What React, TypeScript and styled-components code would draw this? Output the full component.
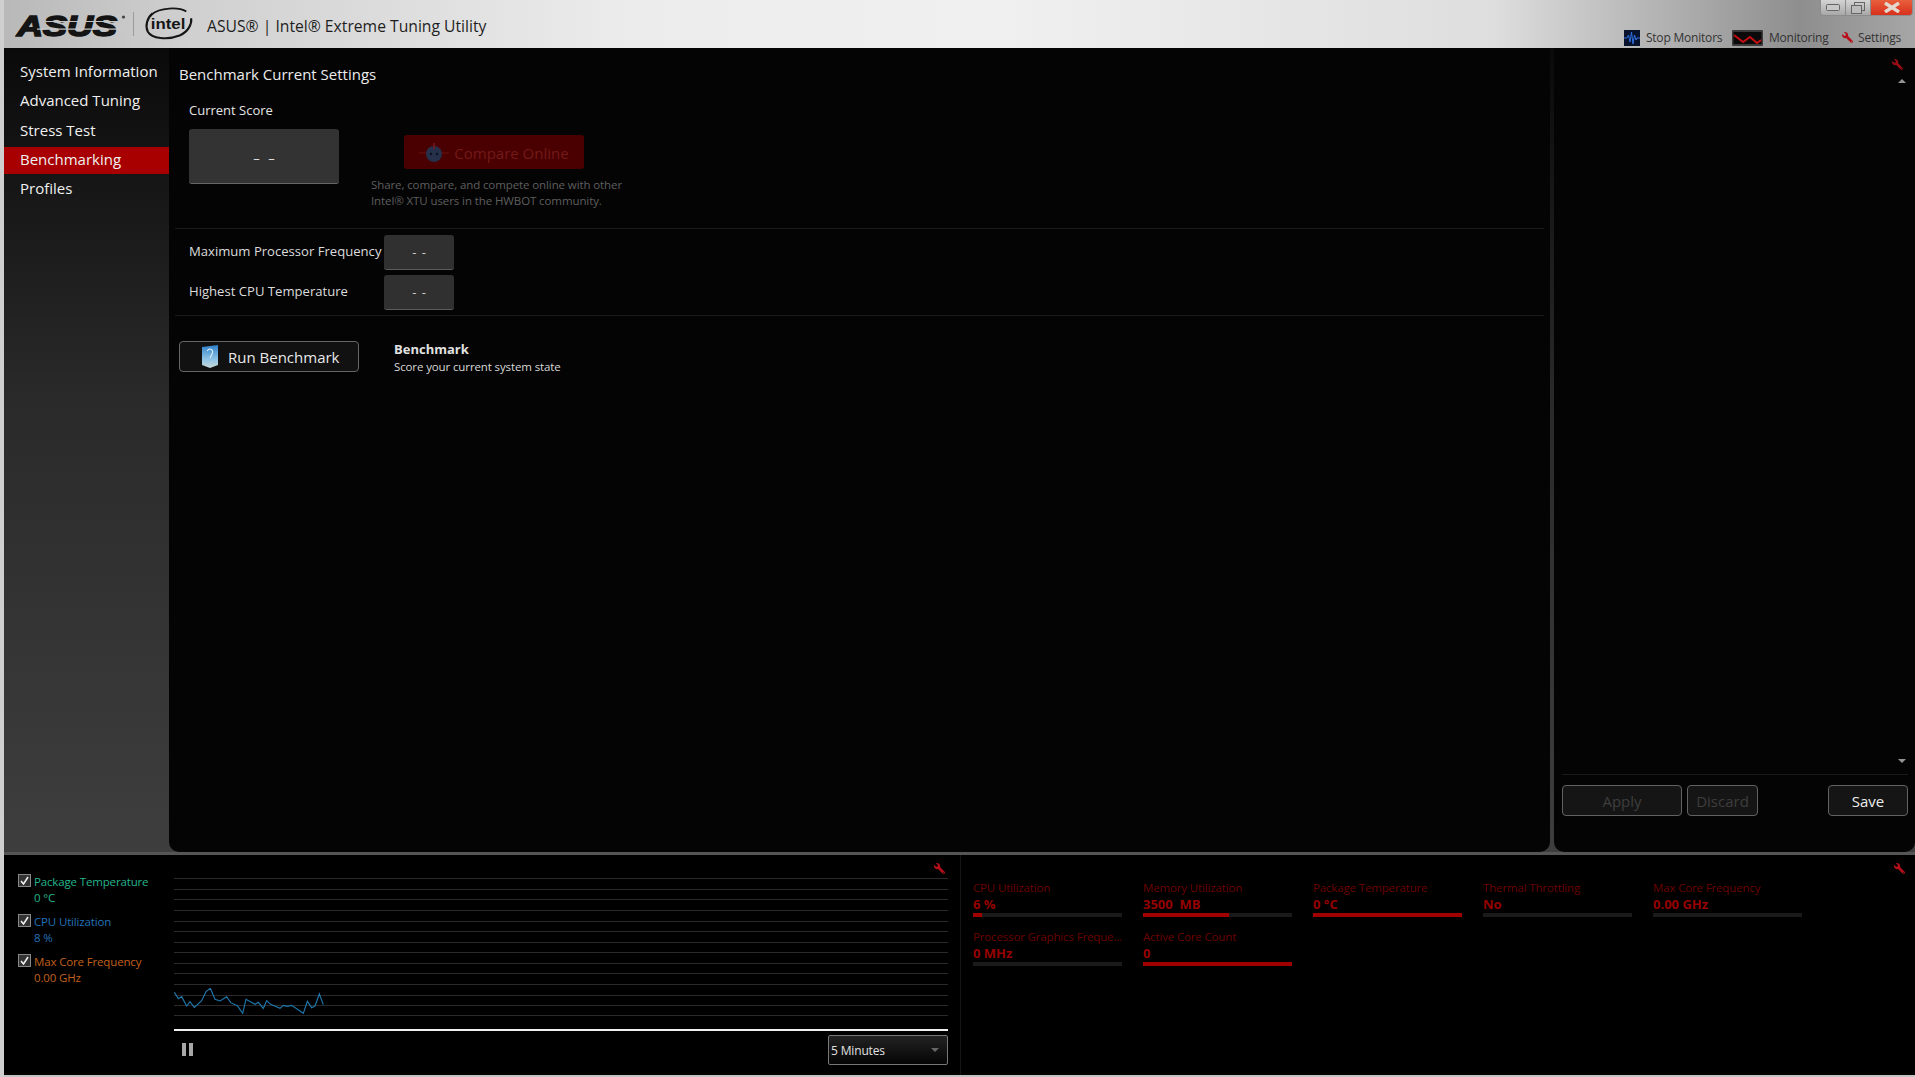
import React from 'react'
import styled, { createGlobalStyle } from 'styled-components'
import { FaWrench } from 'react-icons/fa'

const GlobalStyle = createGlobalStyle`
    html, body {
        margin: 0;
        padding: 0;
        background: #000;
        font-family: "Open Sans", "Noto Sans", "Liberation Sans", sans-serif;
    }
    * {
        box-sizing: border-box;
    }
`

const navItems = ['System Information', 'Advanced Tuning', 'Stress Test', 'Benchmarking', 'Profiles']

const legend = [
    { name: 'Package Temperature', value: '0 °C', color: '#25b58c' },
    { name: 'CPU Utilization', value: '8 %', color: '#2272b8' },
    { name: 'Max Core Frequency', value: '0.00 GHz', color: '#c2601c' },
]

const metrics = [
    { name: 'CPU Utilization', value: '6 %', fill: 6 },
    { name: 'Memory Utilization', value: '3500  MB', fill: 58 },
    { name: 'Package Temperature', value: '0 °C', fill: 100 },
    { name: 'Thermal Throttling', value: 'No', fill: 0 },
    { name: 'Max Core Frequency', value: '0.00 GHz', fill: 0 },
    { name: 'Processor Graphics Freque...', value: '0 MHz', fill: 0 },
    { name: 'Active Core Count', value: '0', fill: 100 },
]

const gridOffsets = [0, 11, 21, 32, 43, 53, 64, 74, 85, 95, 106, 117, 127, 137]

const sparkPoints =
    '1,13 13,32 23,26 38,54 48,41 61,58 83,38 96,11 109,1 123,34 138,39 158,26 170,44 190,53 206,76 216,34 243,49 253,43 268,61 278,38 290,49 318,61 328,52 340,55 353,52 388,76 400,40 413,59 423,54 436,18 448,50'

const AsusLogo = () => (
    <svg width="112" height="36" viewBox="0 0 112 36">
        <text x="2" y="30" fontFamily="Liberation Sans" fontWeight="700" fontStyle="italic" fontSize="29" textLength="100" lengthAdjust="spacingAndGlyphs" fill="#141414" stroke="#141414" strokeWidth="1.6">
            ASUS
        </text>
        <rect x="30" y="15" width="76" height="1" fill="#c4c4c4" />
        <rect x="22" y="22.5" width="84" height="1.2" fill="#cbcbcb" />
        <circle cx="108.5" cy="11" r="1.6" fill="#444" />
    </svg>
)

const IntelLogo = () => (
    <svg width="50" height="34" viewBox="0 0 52 34">
        <path d="M9 6 C3 11 1 19 4 25 C8 32 24 34 37 29 C46 25 50 17 49 11" fill="none" stroke="#161616" strokeWidth="2.2" />
        <path d="M8 7 C16 0 36 -1 44 4" fill="none" stroke="#161616" strokeWidth="1.8" />
        <text x="7" y="22" fontFamily="Liberation Sans" fontWeight="700" fontSize="16" textLength="36" lengthAdjust="spacingAndGlyphs" fill="#161616">
            intel
        </text>
    </svg>
)

const StopMonitorsIcon = () => (
    <svg width="16" height="16" viewBox="0 0 16 16">
        <rect width="16" height="16" fill="#06122e" />
        <path d="M0 8 H3 L4.5 5 L6 12 L7.5 2 L9 14 L10.5 5 L12 10 L13 8 H16" fill="none" stroke="#2f6fe0" strokeWidth="1" />
    </svg>
)

const MonitoringIcon = () => (
    <svg width="31" height="16" viewBox="0 0 31 16">
        <rect width="31" height="16" rx="1" fill="#3c3c3c" />
        <rect x="1.5" y="2" width="28" height="12" fill="#0a0a0a" />
        <path d="M2 5 L11 12 L18 7 L25 13 L29 10" fill="none" stroke="#c40f14" strokeWidth="2" />
    </svg>
)

const CompareIcon = () => (
    <svg width="30" height="22" viewBox="0 0 30 22">
        <path d="M0 11 H30" stroke="#6a1212" strokeWidth="1" />
        <circle cx="15" cy="12" r="8" fill="#27304a" />
        <path d="M15 1 V7" stroke="#7a1a1a" strokeWidth="1.5" />
        <circle cx="12" cy="12" r="1.2" fill="#0c1020" />
        <circle cx="18" cy="12" r="1.2" fill="#0c1020" />
    </svg>
)

const RunIcon = () => (
    <svg width="18" height="23" viewBox="0 0 18 23">
        <defs>
            <linearGradient id="runGrad" x1="0" y1="0" x2="0" y2="1">
                <stop offset="0" stopColor="#2f7fc8" />
                <stop offset="0.6" stopColor="#8cc3e6" />
                <stop offset="1" stopColor="#c8d8d8" />
            </linearGradient>
        </defs>
        <path d="M1 2 L17 0 V20 L9 23 L1 20 Z" fill="url(#runGrad)" />
        <path d="M6 6 C9 2 13 5 11 9 L9 13" fill="none" stroke="#dff0fa" strokeWidth="1.1" />
    </svg>
)

const Spark = () => (
    <SparkSvg viewBox="0 0 450 78" width="150" height="26">
        <polyline points={sparkPoints} fill="none" stroke="#1f78ad" strokeWidth="3.4" />
    </SparkSvg>
)

const App = () => {
    return (
        <Page>
            <GlobalStyle />
            <TitleBar>
                <Brand>
                    <AsusLogo />
                    <BrandSeparator />
                    <IntelLogo />
                    <AppTitle>ASUS® | Intel® Extreme Tuning Utility</AppTitle>
                </Brand>
                <TitleRight>
                    <WindowControls>
                        <WinButton>
                            <svg width="14" height="8" viewBox="0 0 14 8">
                                <rect x="0.5" y="0.5" width="13" height="6" rx="1" fill="#c8c8c8" stroke="#666" />
                            </svg>
                        </WinButton>
                        <WinButton>
                            <svg width="14" height="12" viewBox="0 0 14 12">
                                <rect x="3.5" y="0.5" width="10" height="8" fill="none" stroke="#666" />
                                <rect x="0.5" y="3.5" width="10" height="8" fill="#bbb" stroke="#666" />
                            </svg>
                        </WinButton>
                        <CloseButton>
                            <svg width="18" height="11" viewBox="0 0 18 11">
                                <path d="M2 1 L16 10 M16 1 L2 10" stroke="#e4d8d0" strokeWidth="3.4" />
                            </svg>
                        </CloseButton>
                    </WindowControls>
                    <Toolbar>
                        <ToolItem>
                            <StopMonitorsIcon />
                            Stop Monitors
                        </ToolItem>
                        <ToolItem>
                            <MonitoringIcon />
                            Monitoring
                        </ToolItem>
                        <SettingsItem>
                            <RedWrench size={11} />
                            Settings
                        </SettingsItem>
                    </Toolbar>
                </TitleRight>
            </TitleBar>

            <Upper>
                <Sidebar>
                    {navItems.map(item => (
                        <NavItem key={item} $active={item === 'Benchmarking'}>{item}</NavItem>
                    ))}
                </Sidebar>

                <MainPane>
                    <PaneTitle>Benchmark Current Settings</PaneTitle>
                    <ScoreSection>
                        <ScoreLabel>Current Score</ScoreLabel>
                        <ScoreRow>
                            <ScoreBox>– –</ScoreBox>
                            <CompareColumn>
                                <CompareButton>
                                    <CompareIcon />
                                    Compare Online
                                </CompareButton>
                                <CompareNote>
                                    Share, compare, and compete online with other
                                    <br />
                                    Intel® XTU users in the HWBOT community.
                                </CompareNote>
                            </CompareColumn>
                        </ScoreRow>
                    </ScoreSection>
                    <StatsSection>
                        <StatRow>
                            <StatLabel>Maximum Processor Frequency</StatLabel>
                            <StatValue>- -</StatValue>
                        </StatRow>
                        <StatRow>
                            <StatLabel>Highest CPU Temperature</StatLabel>
                            <StatValue>- -</StatValue>
                        </StatRow>
                    </StatsSection>
                    <RunRow>
                        <RunButton>
                            <RunIcon />
                            Run Benchmark
                        </RunButton>
                        <RunInfo>
                            <RunInfoTitle>Benchmark</RunInfoTitle>
                            <RunInfoText>Score your current system state</RunInfoText>
                        </RunInfo>
                    </RunRow>
                </MainPane>

                <SidePane>
                    <SideTools>
                        <PaneWrench size={11} />
                        <ScrollArrow $up />
                    </SideTools>
                    <SideScroll>
                        <ScrollArrow />
                    </SideScroll>
                    <ActionBar>
                        <ActionGroup>
                            <ActionButton disabled $width={120}>Apply</ActionButton>
                            <ActionButton disabled $width={71}>Discard</ActionButton>
                        </ActionGroup>
                        <ActionButton $width={80}>Save</ActionButton>
                    </ActionBar>
                </SidePane>
            </Upper>

            <Lower>
                <Legend>
                    {legend.map(item => (
                        <LegendItem key={item.name} $color={item.color}>
                            <CheckBox>
                                <svg width="9" height="9" viewBox="0 0 9 9">
                                    <path d="M1 5 L3.5 8 L8 1" fill="none" stroke="#eee" strokeWidth="1.6" />
                                </svg>
                            </CheckBox>
                            <div>
                                <LegendName>{item.name}</LegendName>
                                <LegendValue>{item.value}</LegendValue>
                            </div>
                        </LegendItem>
                    ))}
                </Legend>

                <ChartColumn>
                    <ChartTools>
                        <RedWrench size={11} />
                    </ChartTools>
                    <Chart>
                        {gridOffsets.map((top, i) => (
                            <GridLine key={i} style={{ top }} />
                        ))}
                        <Spark />
                    </Chart>
                    <ChartFooter>
                        <PauseIcon>
                            <span />
                            <span />
                        </PauseIcon>
                        <RangeSelect>
                            5 Minutes
                            <SelectArrow />
                        </RangeSelect>
                    </ChartFooter>
                </ChartColumn>

                <MetricsPane>
                    <MetricsTools>
                        <RedWrench size={11} />
                    </MetricsTools>
                    <MetricsGrid>
                        {metrics.map(m => (
                            <Metric key={m.name}>
                                <MetricName>{m.name}</MetricName>
                                <MetricValue>{m.value}</MetricValue>
                                <MetricBar>
                                    <MetricFill style={{ width: `${m.fill}%` }} />
                                </MetricBar>
                            </Metric>
                        ))}
                    </MetricsGrid>
                </MetricsPane>
            </Lower>
            <BottomEdge />
        </Page>
    )
}

export default App

const Page = styled.div`
    width: 1915px;
    height: 1077px;
    overflow: hidden;
    display: flex;
    flex-direction: column;
    background: #000;
    border-left: 4px solid #cfcfcf;
`
const TitleBar = styled.div`
    height: 48px;
    margin-left: -4px;
    display: flex;
    justify-content: space-between;
    background: linear-gradient(90deg, #b8b8b8 0%, #d0d0d0 10%, #ececec 33%, #f0f0f0 52%, #dedede 78%, #8e8e8e 94%, #a6a6a6 100%);
`
const Brand = styled.div`
    display: flex;
    align-items: center;
    padding-left: 15px;
`
const BrandSeparator = styled.div`
    width: 1px;
    height: 24px;
    margin: 0 10px 0 6px;
    background: #9a9a9a;
`
const AppTitle = styled.div`
    margin-left: 13px;
    padding-top: 3px;
    font-size: 15.7px;
    color: #1e1e1e;
`
const TitleRight = styled.div`
    display: flex;
    flex-direction: column;
    align-items: flex-end;
    justify-content: space-between;
`
const WindowControls = styled.div`
    display: flex;
    height: 16px;
    margin-right: 2px;
    border: 1px solid #8c8c8c;
    border-top: none;
    border-radius: 0 0 4px 4px;
    overflow: hidden;
`
const WinButton = styled.div`
    width: 25px;
    display: flex;
    align-items: center;
    justify-content: center;
    background: linear-gradient(#d4d4d4, #a8a8a8);
    border-right: 1px solid #8c8c8c;
`
const CloseButton = styled(WinButton)`
    width: 41px;
    border-right: none;
    background: linear-gradient(#e8603c, #d8301c);
`
const Toolbar = styled.div`
    display: flex;
    align-items: center;
    gap: 10px;
    padding: 0 14px 2px 0;
`
const ToolItem = styled.div`
    display: flex;
    align-items: center;
    gap: 5.5px;
    font-size: 12px;
    letter-spacing: -0.2px;
    color: #333;
`
const SettingsItem = styled(ToolItem)`
    margin-left: 3px;
`
const RedWrench = styled(FaWrench)`
    color: #b8101a;
    transform: scaleX(-1);
    flex: none;
`
const PaneWrench = styled(RedWrench)`
    color: #9a0c14;
    margin-right: 3px;
`
const Upper = styled.div`
    height: 804px;
    display: flex;
    background: linear-gradient(#0a0a0a 0%, #2a2a2a 44%, #3e3e3e 100%);
`
const Sidebar = styled.nav`
    width: 165px;
    padding-top: 11px;
    display: flex;
    flex-direction: column;
    gap: 2.33px;
`
const NavItem = styled.div<{ $active?: boolean }>`
    height: 27px;
    padding: 0 0 3px 16px;
    display: flex;
    align-items: center;
    font-size: 15px;
    color: #f0f0f0;
    background: ${p => (p.$active ? '#a80000' : 'transparent')};
`
const MainPane = styled.main`
    width: 1381px;
    background: #040404;
    border-radius: 0 0 10px 10px;
    padding: 13px 6px 0 6px;
`
const PaneTitle = styled.div`
    padding-left: 4px;
    height: 26px;
    line-height: 26px;
    font-size: 15px;
    color: #ececec;
`
const ScoreSection = styled.section`
    height: 142px;
    padding: 13px 0 0 14px;
    border-bottom: 1px solid #1a1a1a;
`
const ScoreLabel = styled.div`
    font-size: 13px;
    line-height: 20px;
    color: #e4e4e4;
`
const ScoreRow = styled.div`
    display: flex;
    margin-top: 9px;
`
const ScoreBox = styled.div`
    width: 150px;
    height: 55px;
    padding-top: 3px;
    display: flex;
    align-items: center;
    justify-content: center;
    background: #333;
    border-bottom: 1px solid #666;
    border-radius: 3px;
    color: #ddd;
    font-size: 13px;
    word-spacing: 5px;
`
const CompareColumn = styled.div`
    margin-left: 32px;
    padding-top: 6px;
`
const CompareButton = styled.div`
    width: 180px;
    height: 34px;
    margin-left: 33px;
    padding-top: 2px;
    display: flex;
    align-items: center;
    justify-content: center;
    gap: 5px;
    background: #4a0000;
    border-radius: 3px;
    font-size: 15px;
    color: #731a1a;
`
const CompareNote = styled.div`
    margin-top: 8px;
    font-size: 11.5px;
    letter-spacing: -0.1px;
    line-height: 16px;
    color: #5e5e5e;
`
const StatsSection = styled.section`
    height: 87px;
    padding: 6px 0 0 14px;
    border-bottom: 1px solid #1a1a1a;
    display: flex;
    flex-direction: column;
    gap: 5px;
`
const StatRow = styled.div`
    display: flex;
    align-items: center;
`
const StatLabel = styled.div`
    width: 195px;
    padding-bottom: 4px;
    font-size: 13.1px;
    white-space: nowrap;
    color: #dcdcdc;
`
const StatValue = styled.div`
    width: 70px;
    height: 35px;
    display: flex;
    align-items: center;
    justify-content: center;
    background: #303030;
    border-bottom: 1px solid #5c5c5c;
    border-radius: 3px;
    font-size: 13px;
    word-spacing: 2px;
    color: #ccc;
`
const RunRow = styled.section`
    display: flex;
    padding: 25px 0 0 4px;
`
const RunButton = styled.button`
    width: 180px;
    height: 31px;
    display: flex;
    align-items: center;
    padding: 0 0 0 21px;
    gap: 9px;
    background: #111;
    border: 1px solid #666;
    border-radius: 4px;
    font-family: inherit;
    font-size: 15px;
    color: #e8e8e8;
`
const RunInfo = styled.div`
    margin-left: 35px;
`
const RunInfoTitle = styled.div`
    font-size: 13px;
    line-height: 16px;
    font-weight: 700;
    color: #e2e2e2;
`
const RunInfoText = styled.div`
    margin-top: 2px;
    font-size: 11.5px;
    letter-spacing: -0.12px;
    line-height: 16px;
    color: #d8d8d8;
`
const SidePane = styled.aside`
    flex: 1;
    margin-left: 4px;
    display: flex;
    flex-direction: column;
    background: #040404;
    border-radius: 0 0 10px 10px;
`
const SideTools = styled.div`
    display: flex;
    flex-direction: column;
    align-items: flex-end;
    gap: 9px;
    padding: 11px 9px 0 0;
`
const SideScroll = styled.div`
    flex: 1;
    display: flex;
    align-items: flex-end;
    justify-content: flex-end;
    padding: 0 9px 11px 0;
`
const ScrollArrow = styled.div<{ $up?: boolean }>`
    width: 0;
    height: 0;
    border-left: 4px solid transparent;
    border-right: 4px solid transparent;
    ${p => (p.$up ? 'border-bottom: 4px solid #949494;' : 'border-top: 4px solid #949494;')}
`
const ActionBar = styled.div`
    height: 78px;
    margin: 0 7px 0 8px;
    padding-top: 10px;
    border-top: 1px solid #1a1a1a;
    display: flex;
    justify-content: space-between;
    align-items: flex-start;
`
const ActionGroup = styled.div`
    display: flex;
    gap: 5px;
`
const ActionButton = styled.button<{ $width: number }>`
    width: ${p => p.$width}px;
    height: 31px;
    padding: 0;
    background: #151515;
    border: 1px solid #626262;
    border-radius: 4px;
    font-family: inherit;
    font-size: 15px;
    color: ${p => (p.disabled ? '#3e3e3e' : '#ececec')};
`
const Lower = styled.div`
    height: 223px;
    display: flex;
    background: #000;
    border-top: 3px solid #555;
`
const Legend = styled.div`
    width: 170px;
    padding: 19px 0 0 14px;
    display: flex;
    flex-direction: column;
    gap: 8px;
`
const LegendItem = styled.div<{ $color: string }>`
    display: flex;
    gap: 3px;
    color: ${p => p.$color};
`
const CheckBox = styled.div`
    width: 13px;
    height: 13px;
    display: flex;
    align-items: center;
    justify-content: center;
    flex: none;
    background: #333;
    border: 1px solid #888;
`
const LegendName = styled.div`
    font-size: 11.5px;
    letter-spacing: -0.15px;
    line-height: 16px;
`
const LegendValue = styled(LegendName)``
const ChartColumn = styled.div`
    width: 774px;
    display: flex;
    flex-direction: column;
`
const ChartTools = styled.div`
    height: 23px;
    display: flex;
    justify-content: flex-end;
    align-items: flex-start;
    padding: 8px 3px 0 0;
`
const Chart = styled.div`
    position: relative;
    height: 153px;
    border-bottom: 2px solid #f0f0f0;
`
const GridLine = styled.div`
    position: absolute;
    left: 0;
    right: 0;
    height: 1px;
    background: #2a2a2a;
`
const SparkSvg = styled.svg`
    position: absolute;
    left: 0;
    top: 110px;
`
const ChartFooter = styled.div`
    display: flex;
    justify-content: space-between;
    padding-top: 4px;
`
const PauseIcon = styled.div`
    margin: 8px 0 0 8px;
    display: flex;
    gap: 3px;
    span {
        width: 4px;
        height: 13px;
        background: #a8a8a8;
    }
`
const RangeSelect = styled.div`
    width: 120px;
    height: 30px;
    padding: 0 8px 0 2px;
    display: flex;
    align-items: center;
    justify-content: space-between;
    background: linear-gradient(#222, #050505);
    border: 1px solid #777;
    border-radius: 2px;
    font-size: 12px;
    letter-spacing: -0.15px;
    color: #e0e0e0;
`
const SelectArrow = styled.div`
    width: 0;
    height: 0;
    border-left: 4px solid transparent;
    border-right: 4px solid transparent;
    border-top: 4px solid #666;
`
const MetricsPane = styled.div`
    flex: 1;
    margin-left: 12px;
    border-left: 1px solid #161616;
    display: flex;
    flex-direction: column;
    padding-left: 12px;
`
const MetricsTools = styled.div`
    height: 23px;
    display: flex;
    justify-content: flex-end;
    align-items: flex-start;
    padding: 8px 10px 0 0;
`
const MetricsGrid = styled.div`
    display: grid;
    grid-template-columns: repeat(5, 149px);
    column-gap: 21px;
    row-gap: 11px;
    margin-top: 1px;
`
const Metric = styled.div`
    display: flex;
    flex-direction: column;
`
const MetricName = styled.div`
    font-size: 11.5px;
    letter-spacing: -0.15px;
    line-height: 17px;
    white-space: nowrap;
    color: #6c0000;
`
const MetricValue = styled.div`
    font-size: 13px;
    line-height: 17px;
    font-weight: 700;
    white-space: pre;
    color: #960000;
`
const MetricBar = styled.div`
    height: 4px;
    background: #1a1a1a;
`
const MetricFill = styled.div`
    height: 100%;
    background: #a00000;
`
const BottomEdge = styled.div`
    height: 2px;
    margin-left: -4px;
    background: #c4c4c4;
`
